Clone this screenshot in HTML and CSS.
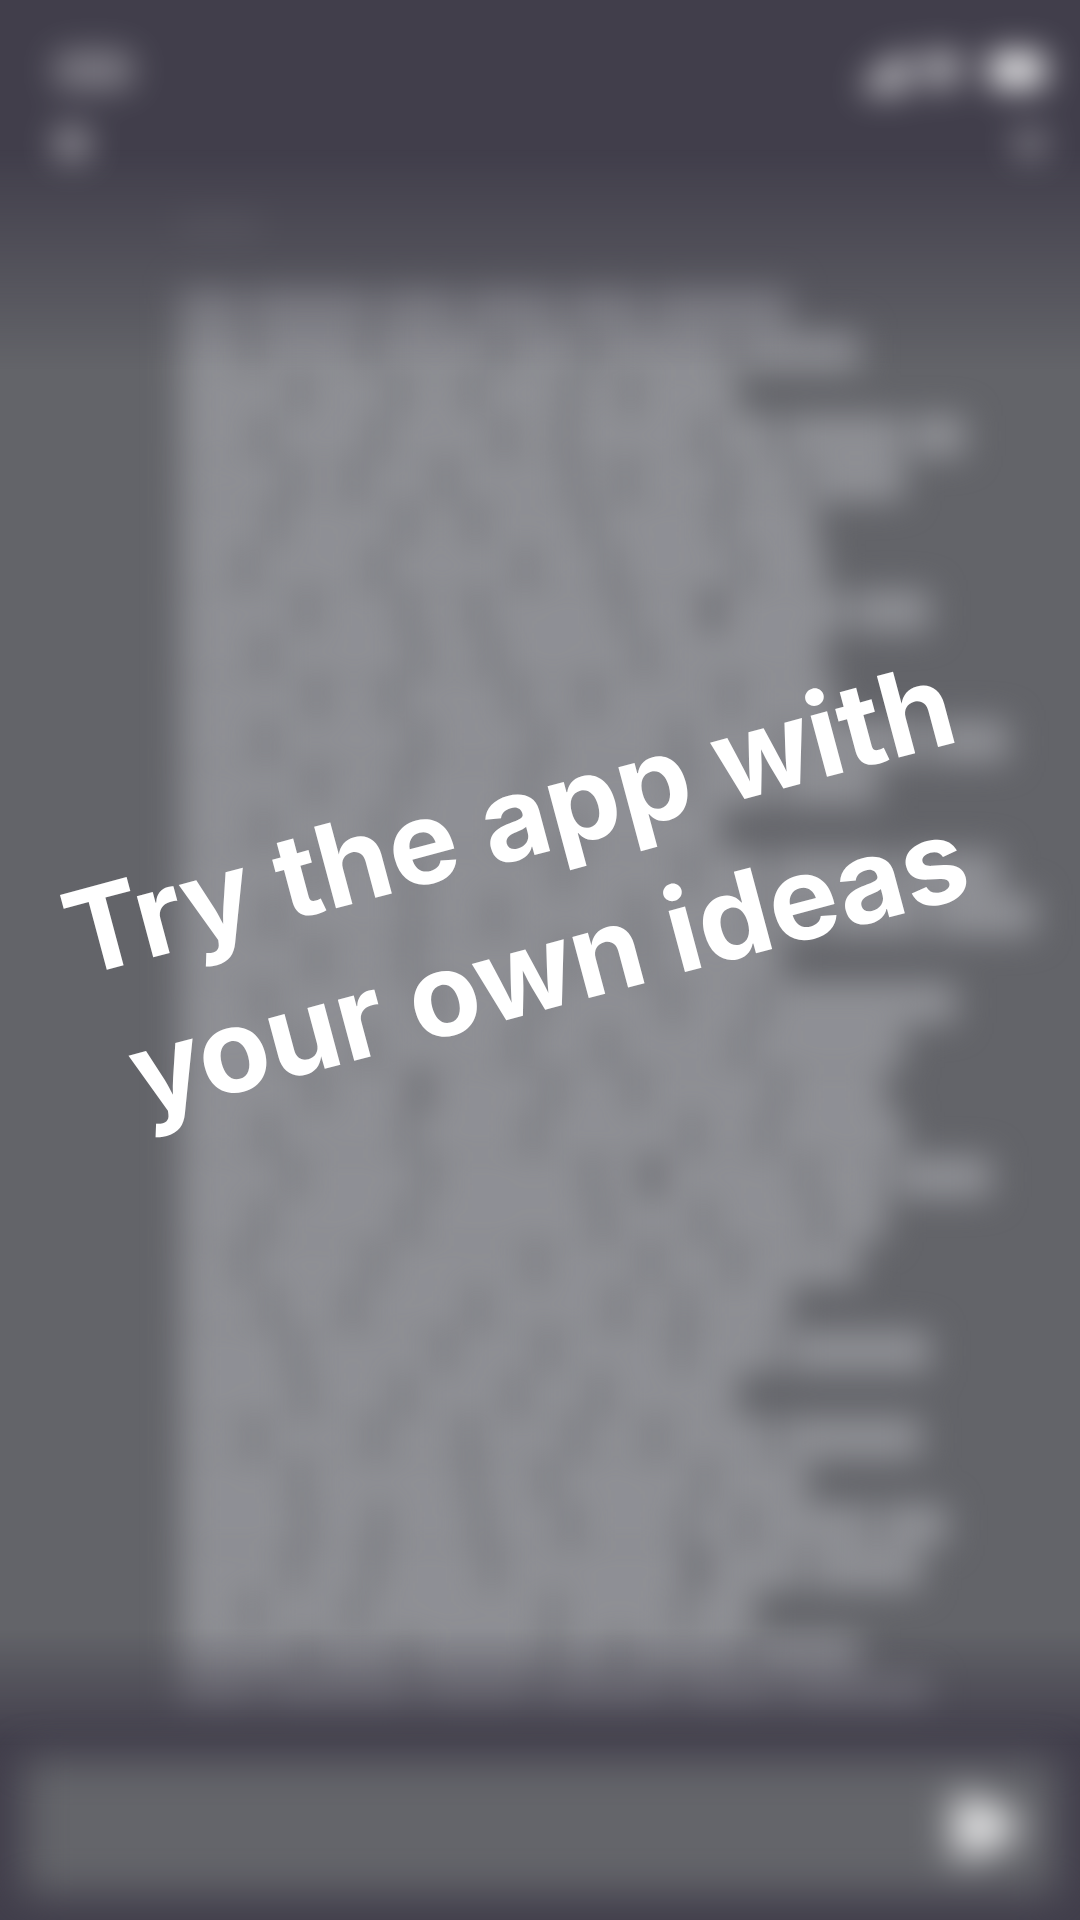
FILE: index.html
```html
<!DOCTYPE html>
<html lang="en">
<head>
    <meta charset="UTF-8">
    <meta name="viewport" content="width=device-width, initial-scale=1.0">
    <title>Try the app with your own ideas</title>
    <link rel="stylesheet" href="styles.css">
</head>
<body>
    <div class="screen">
        <header class="header">
            <div class="status-bar">
                <div class="clock"></div>
                <svg class="status-icons" width="184" height="48" viewBox="0 0 184 48">
                    <path d="M0 48 L0 34 L34 8 L46 8 L46 46 Z" fill="#fff" opacity=".64"/>
                    <path d="M54 16 Q78 -6 102 16 L84 44 L72 44 Z" fill="#fff" opacity=".62"/>
                    <rect x="125" y="7" width="56" height="34" rx="8" fill="#fff" opacity=".96"/>
                </svg>
            </div>
            <nav class="nav-bar">
                <button type="button" class="nav-button" aria-label="Back">
                    <svg width="36" height="36" viewBox="0 0 36 36"><circle cx="18" cy="18" r="18" fill="#fff" opacity=".46"/></svg>
                </button>
                <button type="button" class="nav-button" aria-label="Menu">
                    <svg width="36" height="36" viewBox="0 0 36 36"><circle cx="18" cy="18" r="17" fill="#fff" opacity=".32"/></svg>
                </button>
            </nav>
        </header>

        <main class="chat">
            <div class="sender"></div>
            <div class="message" id="message"></div>
        </main>

        <form class="composer">
            <input type="text" class="composer-input" aria-label="Message">
            <button type="button" class="send-button" aria-label="Send">
                <svg width="76" height="76" viewBox="0 0 76 76"><path d="M10 8 L70 38 L10 68 Z" fill="#fff" stroke="#fff" stroke-width="8" stroke-linejoin="round"/></svg>
            </button>
        </form>
    </div>

    <div class="overlay">
        <h1 class="headline">Try the app with<br>your own ideas</h1>
    </div>

    <script>
        // line width in percent, then the relative widths of its words
        const lines = [
            [70, 4, 8, 5, 6, 5, 9],
            [78, 5, 8, 9, 6, 10, 9],
            [64, 9, 7, 5, 7, 4, 8],
            [90, 6, 8, 9, 4, 10, 5, 9, 4],
            [83, 8, 4, 6, 9, 3, 7, 5, 7],
            [73, 6, 8, 4, 7, 8, 6],
            [74, 4, 8, 9, 5, 8, 5],
            [86, 8, 6, 4, 9, 5, 0, 8, 5],
            [74, 5, 9, 4, 9, 11],
            [75, 8, 4, 7, 4, 8, 6],
            [95, 5, 9, 7, 8, 6, 8, 5],
            [80, 8, 5, 7, 9, 5, 6],
            [62, 5, 7, 8, 3, 9],
            [94, 9, 6, 10, 8, 5, 8, 7],
            [98, 6, 9, 5, 9, 8, 3, 7, 7],
            [69, 8, 5, 9, 4, 8],
            [89, 5, 10, 6, 8, 5, 12],
            [83, 7, 4, 9, 5, 8, 10],
            [81, 9, 6, 0, 8, 5, 9, 7],
            [83, 5, 8, 7, 9, 4, 8],
            [93, 7, 8, 10, 3, 0, 9, 5, 6],
            [81, 5, 9, 12, 6, 7, 4],
            [78, 4, 8, 10, 7, 5, 8],
            [70, 6, 5, 8, 9, 4, 7],
            [86, 7, 9, 6, 8, 6, 9],
            [64, 8, 6, 7, 5, 9],
            [85, 5, 8, 6, 7, 5, 8, 10],
            [72, 7, 10, 4, 9, 6],
            [88, 9, 5, 7, 6, 8, 4, 9, 5],
            [85, 8, 5, 8, 14, 0, 7, 8],
            [66, 5, 7, 14, 9, 5],
            [78, 8, 6, 9, 4, 8, 7],
            [86, 5, 9, 7, 8, 6, 9]
        ];

        document.getElementById('message').innerHTML = lines.map(([width, ...words]) => `
            <div class="line" style="width: ${width}%">
                ${words.map(w => `<span class="word" style="flex-grow: ${w}"></span>`).join('')}
            </div>`).join('');
    </script>
</body>
</html>
```

FILE: styles.css
```css
* {
    box-sizing: border-box;
}
body {
    margin: 0;
    background-color: #413e4b;
    font-family: Inter, "Liberation Sans", sans-serif;
}
button {
    display: flex;
    padding: 0;
    border: none;
    background: none;
    cursor: pointer;
}
.screen {
    display: flex;
    flex-direction: column;
    min-height: 100vh;
    overflow: hidden;
}

/* top bars */
.header {
    height: 164px;
    padding: 46px 32px 0 54px;
    margin-bottom: -14px;
    filter: blur(17px);
}
.status-bar {
    display: flex;
    justify-content: space-between;
    align-items: center;
}
.clock {
    width: 80px;
    height: 38px;
    border-radius: 12px;
    background-color: rgba(255, 255, 255, 0.32);
}
.nav-bar {
    display: flex;
    justify-content: space-between;
    padding-top: 32px;
}

/* conversation */
.chat {
    flex: 1;
    display: flex;
    flex-direction: column;
    padding: 56px 28px 24px 180px;
    background-color: #636469;
    -webkit-mask-image: linear-gradient(transparent, #000 220px, #000 calc(100% - 116px), transparent);
    mask-image: linear-gradient(transparent, #000 220px, #000 calc(100% - 116px), transparent);
}
.sender {
    width: 80px;
    height: 30px;
    margin-bottom: 48px;
    background-color: rgba(255, 255, 255, 0.14);
    filter: blur(17px);
}
.message {
    flex: 1;
    display: flex;
    flex-direction: column;
    filter: blur(17px);
}
.line {
    flex: 1;
    display: flex;
    align-items: center;
    gap: 9px;
}
.word {
    height: 40px;
    background-color: #929398;
}

/* input row */
.composer {
    display: flex;
    align-items: center;
    margin: 14px 24px 26px;
    padding-right: 30px;
    height: 135px;
    background-color: #64656a;
    filter: blur(20px);
}
.composer-input {
    flex: 1;
    height: 100%;
    border: none;
    background: none;
}

/* headline over the screen */
.overlay {
    position: absolute;
    inset: 0 24px 136px 0;
    display: flex;
    align-items: center;
    justify-content: center;
}
.headline {
    margin: 0;
    color: #fff;
    font-size: 116px;
    font-weight: 700;
    line-height: 152px;
    text-align: center;
    white-space: nowrap;
    transform: rotate(-15deg);
}
```
